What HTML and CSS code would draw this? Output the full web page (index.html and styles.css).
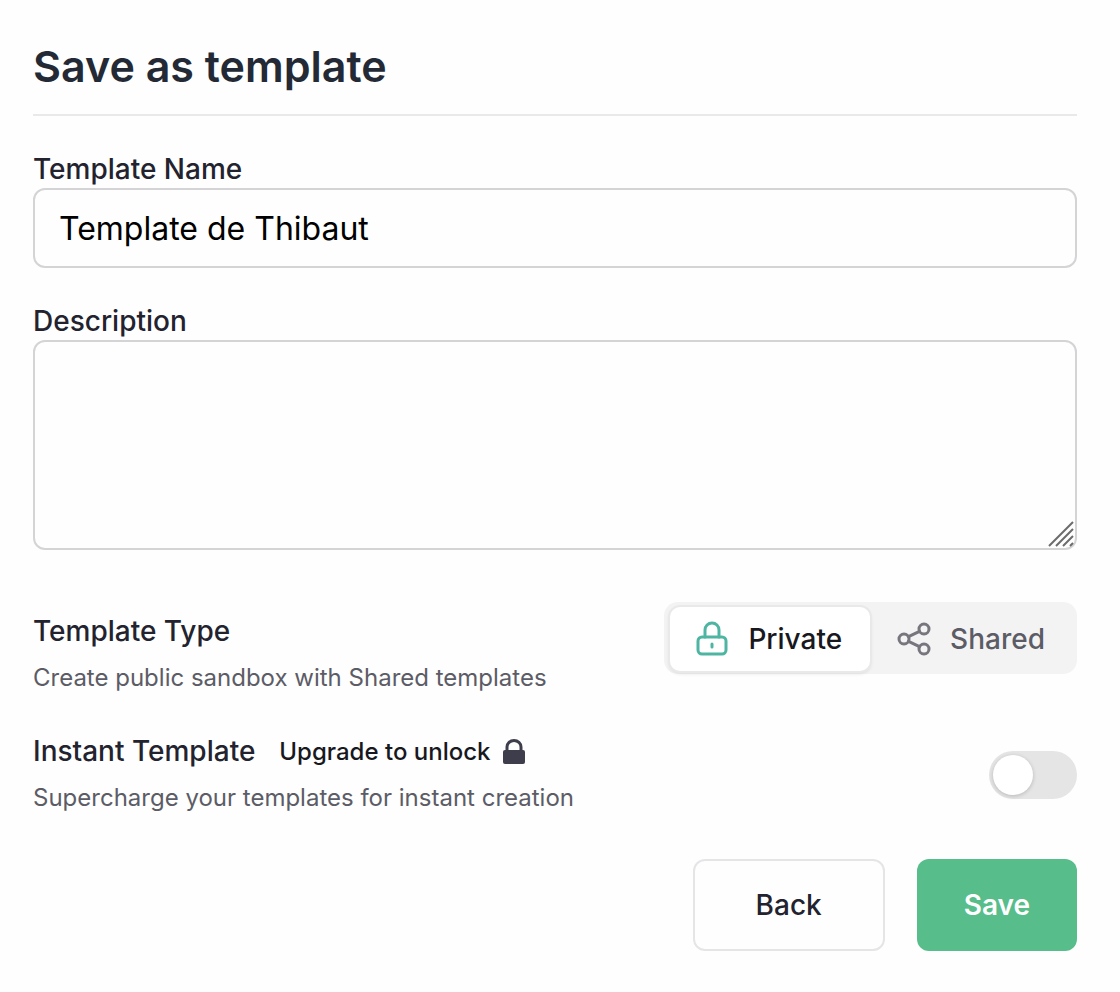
FILE: index.html
```html
<!DOCTYPE html>
<html lang="en">

<head>
    <meta charset="UTF-8">
    <meta name="viewport" content="width=device-width, initial-scale=1">
    <title>Save as template</title>
    <link rel="stylesheet" href="styles.css">
</head>

<body>

    <form class="template-form">
        <h1 class="title">Save as template</h1>

        <div class="field">
            <label class="label" for="name">Template Name</label>
            <input class="input" id="name" type="text" value="Template de Thibaut">
        </div>

        <div class="field">
            <label class="label" for="description">Description</label>
            <div class="textarea-box">
                <textarea class="input textarea" id="description"></textarea>
                <svg class="grip" viewBox="0 0 26 26" aria-hidden="true">
                    <path d="M1 25L25 1M8 25L25 8M15 25L25 15M22 25L25 22" />
                </svg>
            </div>
        </div>

        <div class="row type-row">
            <div class="row-text">
                <h2 class="label" id="type-label">Template Type</h2>
                <p class="hint">Create public sandbox with Shared templates</p>
            </div>
            <div class="segments" role="radiogroup" aria-labelledby="type-label">
                <label class="segment">
                    <input class="segment-radio" type="radio" name="type" value="private" checked>
                    <svg class="segment-icon" viewBox="0 0 36 36" aria-hidden="true">
                        <rect x="4" y="16" width="28" height="17" rx="4" />
                        <path d="M11 16V9a7 7 0 0 1 14 0v7M18 23v3" />
                    </svg>
                    <span>Private</span>
                </label>
                <label class="segment">
                    <input class="segment-radio" type="radio" name="type" value="shared">
                    <svg class="segment-icon" viewBox="0 0 36 36" aria-hidden="true">
                        <circle cx="8" cy="18" r="5" />
                        <circle cx="28" cy="8" r="5" />
                        <circle cx="28" cy="28" r="5" />
                        <path d="M12.500 15.700L23.500 10.300M12.500 20.300L23.500 25.700" />
                    </svg>
                    <span>Shared</span>
                </label>
            </div>
        </div>

        <div class="row">
            <div class="row-text">
                <div class="label-line">
                    <label class="label" for="instant">Instant Template</label>
                    <span class="upgrade">Upgrade to unlock
                        <svg class="lock" viewBox="0 0 24 26" aria-hidden="true">
                            <rect x="1" y="11" width="22" height="14" rx="2" />
                            <path d="M5 12V8a7 6.500 0 0 1 14 0v4" />
                        </svg>
                    </span>
                </div>
                <p class="hint">Supercharge your templates for instant creation</p>
            </div>
            <input class="switch" id="instant" type="checkbox" role="switch">
        </div>

        <div class="actions">
            <button class="btn btn-back" type="button">Back</button>
            <button class="btn btn-save" type="submit">Save</button>
        </div>
    </form>

</body>

</html>
```

FILE: styles.css
```css
* {
    margin: 0;
    padding: 0;
    box-sizing: border-box;
}

body {
    background: #fefefe;
    color: #23232f;
    font-family: Inter, "Liberation Sans", sans-serif;
}

.template-form {
    padding: 40px 43px 40px 33px;
}

.title {
    padding-bottom: 22px;
    border-bottom: 2px solid #e9e9eb;
    margin-bottom: 36px;
    font-size: 43px;
    line-height: 52px;
    font-weight: 600;
    color: #242a35;
}

.field {
    margin-bottom: 36px;
}

.label {
    display: block;
    padding-bottom: 2px;
    font-size: 28px;
    line-height: 34px;
    font-weight: 500;
}

.input {
    display: block;
    width: 100%;
    height: 80px;
    padding: 0 24px;
    border: 2px solid #d4d4d6;
    border-radius: 12px;
    background: #fefefe;
    color: #000;
    font-family: inherit;
    font-size: 32px;
    outline: none;
}

.textarea-box {
    position: relative;
}

.textarea {
    height: 210px;
    padding: 16px 24px;
    resize: none;
}

.grip {
    position: absolute;
    right: 3px;
    bottom: 3px;
    width: 26px;
    height: 26px;
    fill: none;
    stroke: #6c6c6c;
    stroke-width: 2;
}

.row {
    display: flex;
    justify-content: space-between;
    align-items: center;
    margin-bottom: 36px;
}

.type-row {
    align-items: flex-start;
    margin-top: 52px;
    margin-bottom: 38px;
}

.type-row .row-text {
    padding-top: 12px;
}

.hint {
    margin-top: 12px;
    padding-bottom: 2px;
    font-size: 24px;
    line-height: 32px;
    color: #5c5c66;
}

.segments {
    display: flex;
    gap: 2px;
    padding: 5px 4px 3px 6px;
    border-radius: 14px;
    background: #f3f3f4;
}

.segment {
    display: flex;
    align-items: center;
    gap: 18px;
    height: 64px;
    padding: 0 28px 0 24px;
    border-radius: 10px;
    font-size: 28px;
    font-weight: 500;
    color: #5c5c66;
    cursor: pointer;
}

.segment:has(:checked) {
    background: #fff;
    box-shadow: 0 0 0 2px #e9e9eb, 0 2px 4px #00000026;
    color: #18181f;
}

.segment-radio {
    appearance: none;
}

.segment-icon {
    width: 36px;
    height: 36px;
    margin-left: -18px;
    fill: none;
    stroke: #76767e;
    stroke-width: 3;
    stroke-linecap: round;
}

.segment:has(:checked) .segment-icon {
    stroke: #4fb5a3;
}

.label-line {
    display: flex;
    align-items: center;
    gap: 24px;
}

.upgrade {
    display: flex;
    align-items: center;
    gap: 12px;
    font-size: 24px;
    line-height: 32px;
    font-weight: 500;
    color: #18181f;
}

.lock {
    width: 24px;
    height: 26px;
    fill: #3d3d4c;
}

.lock path {
    fill: none;
    stroke: #3d3d4c;
    stroke-width: 3;
}

.switch {
    appearance: none;
    width: 88px;
    height: 48px;
    padding: 4px;
    border-radius: 24px;
    background: #e5e5e5;
    cursor: pointer;
}

.switch::before {
    content: "";
    display: block;
    width: 40px;
    height: 40px;
    border-radius: 50%;
    background: #fff;
    box-shadow: 0 1px 4px #00000033;
}

.switch:checked {
    background: #56bd8b;
}

.switch:checked::before {
    margin-left: auto;
}

.actions {
    display: flex;
    justify-content: flex-end;
    gap: 32px;
    margin-top: 43px;
}

.btn {
    height: 92px;
    padding: 0 47px;
    border: none;
    border-radius: 12px;
    font-family: inherit;
    font-size: 28px;
    font-weight: 500;
    cursor: pointer;
}

.btn-back {
    padding: 0 61px;
    border: 2px solid #e5e5e7;
    background: #fefefe;
    color: #23232f;
}

.btn-save {
    background: #56bd8b;
    color: #fff;
    font-weight: 600;
}
```
